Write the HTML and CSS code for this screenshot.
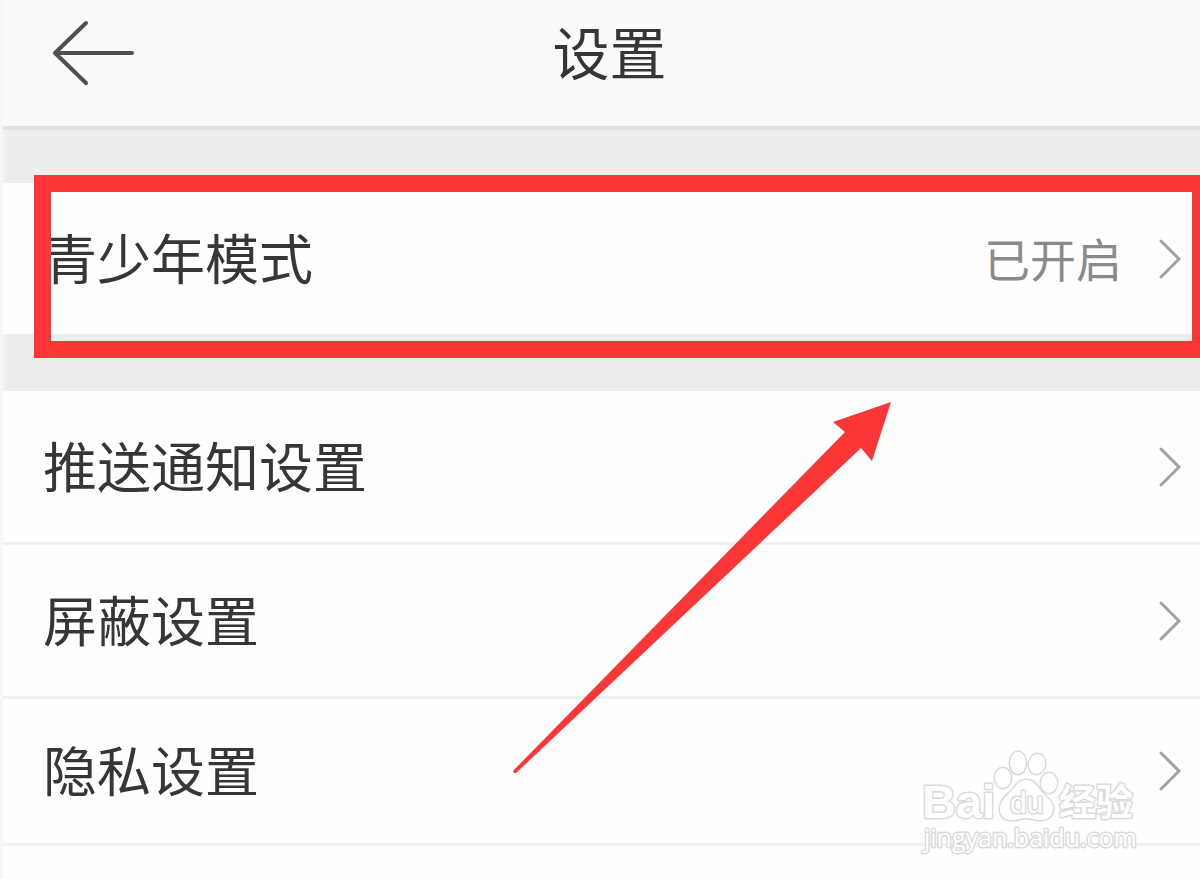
FILE: index.html
```html
<!DOCTYPE html>
<html lang="zh-CN">
<head>
<meta charset="utf-8">
<meta name="viewport" content="width=device-width, initial-scale=1">
<title>设置</title>
<link rel="stylesheet" href="styles.css">
</head>
<body>
<div class="page">
  <header class="header">
    <button class="back" type="button" aria-label="返回">
      <svg width="84" height="66" viewBox="0 0 84 66" fill="none" stroke="#505050" stroke-width="4" stroke-linecap="round" stroke-linejoin="round" aria-hidden="true">
        <path d="M35 3 4 33 35 63" /><path d="M5 33H81" />
      </svg>
    </button>
    <h1 class="title">设置</h1>
  </header>
  <main class="settings">
    <div class="group">
      <a class="row" href="#teen">
        <span class="label">青少年模式</span>
        <span class="status">已开启</span>
        <svg class="chevron" viewBox="0 0 24 42" aria-hidden="true"><path d="M3 3 21 21 3 39" /></svg>
      </a>
      <div class="highlight"></div>
    </div>
    <nav class="group list">
      <a class="row" href="#push">
        <span class="label">推送通知设置</span>
        <svg class="chevron" viewBox="0 0 24 42" aria-hidden="true"><path d="M3 3 21 21 3 39" /></svg>
      </a>
      <a class="row" href="#block">
        <span class="label">屏蔽设置</span>
        <svg class="chevron" viewBox="0 0 24 42" aria-hidden="true"><path d="M3 3 21 21 3 39" /></svg>
      </a>
      <a class="row short" href="#privacy">
        <span class="label">隐私设置</span>
        <svg class="chevron" viewBox="0 0 24 42" aria-hidden="true"><path d="M3 3 21 21 3 39" /></svg>
      </a>
    </nav>
  </main>
  <svg class="pointer" viewBox="0 0 380 372" aria-hidden="true">
    <path d="M1 369 333 30 321 20 379 0 360 59 349 46 4 371 2 371Z" fill="#fb3636" />
  </svg>
  <svg class="watermark" viewBox="0 0 224 112" role="img" aria-label="Baidu 经验">
    <g class="mark">
      <text class="brand" x="4" y="71">Bai</text>
      <ellipse cx="85" cy="31" rx="8" ry="10" />
      <ellipse cx="100" cy="16" rx="8" ry="11" />
      <ellipse cx="119" cy="17" rx="8" ry="10" transform="rotate(10 119 17)" />
      <ellipse cx="131" cy="36" rx="8" ry="10" />
      <path d="M108 33C101 33 98 39 93 44C89 49 82 53 82 62C82 70 87 73 94 73C100 73 103 71 108 71C113 71 117 73 123 73C130 73 135 69 135 61C135 53 126 49 122 43C118 37 115 33 108 33Z" />
      <text class="du" x="92" y="66">du</text>
      <text class="jingyan" x="141" y="69">经验</text>
      <text class="url" x="6" y="100">jingyan.baidu.com</text>
    </g>
  </svg>
</div>
</body>
</html>
```
FILE: styles.css
```css
* {
  box-sizing: border-box;
}

body {
  margin: 0;
  background: #fefefe;
  color: #363636;
  font-family: "Noto Sans CJK SC", sans-serif;
}

.page {
  position: relative;
  min-height: 100vh;
  overflow: hidden;
  border-left: 3px solid #f7f7f7;
}

.header {
  display: grid;
  grid-template-columns: 1fr auto 1fr;
  align-items: center;
  padding: 12px 32px 32px 48px;
  border-bottom: 4px solid #e1e1e1;
  background: #fafafa;
}

.back {
  display: flex;
  justify-self: start;
  padding: 0;
  border: 0;
  background: none;
}

.title {
  margin: 0;
  padding-bottom: 6px;
  font-size: 57px;
  font-weight: 400;
  line-height: 76px;
}

.settings {
  padding-top: 53px;
  border-left: 4px solid #f1f1f1;
  background: #ededed;
}

.group {
  position: relative;
  margin-left: -4px;
  background: #fefefe;
}

.list {
  margin-top: 57px;
}

.row {
  display: flex;
  align-items: center;
  min-height: 151px;
  padding: 0 18px 0 40px;
  color: inherit;
  text-decoration: none;
}

.list .row {
  min-height: 154px;
  border-bottom: 3px solid #f1f1f1;
}

.list .short {
  min-height: 147px;
}

.label {
  flex: 1;
  padding-bottom: 4px;
  font-size: 54px;
  line-height: 80px;
}

.status {
  margin-right: 36px;
  padding-bottom: 4px;
  color: #8a8a8a;
  font-size: 46px;
  line-height: 68px;
}

.chevron {
  width: 24px;
  height: 42px;
  fill: none;
  stroke: #a2a2a2;
  stroke-width: 3;
  stroke-linecap: round;
}

.highlight {
  position: absolute;
  inset: -8px 0 -24px 31px;
  border: 17px solid #fb3636;
  border-right-width: 8px;
  pointer-events: none;
}

.pointer {
  position: absolute;
  top: 402px;
  left: 509px;
  width: 380px;
  height: 372px;
  pointer-events: none;
}

.watermark {
  position: absolute;
  top: 747px;
  right: 58px;
  width: 224px;
  height: 112px;
  pointer-events: none;
}

.mark {
  fill: #ffffff;
  stroke: #dadada;
  stroke-width: 3;
  stroke-linejoin: round;
  paint-order: stroke;
}

.brand {
  font: bold 47px "Liberation Sans", sans-serif;
}

.du {
  font: 30px "Liberation Sans", sans-serif;
}

.jingyan {
  font: bold 37px "Noto Sans CJK SC", sans-serif;
}

.url {
  font: 25px "Open Sans", sans-serif;
}
```
